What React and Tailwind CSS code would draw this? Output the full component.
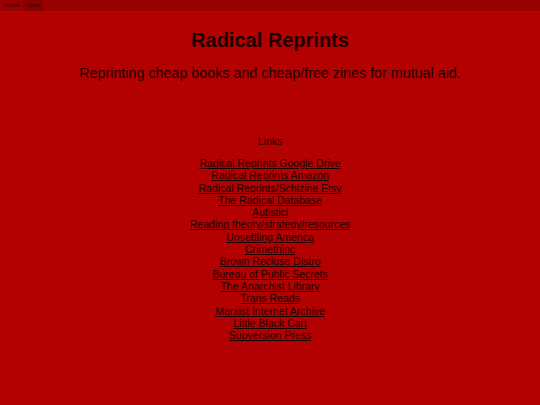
import React from "react";

const links = [
  "Radical Reprints Google Drive",
  "Radical Reprints Amazon",
  "Radical Reprints/Schizine Etsy",
  "The Radical Database",
  "Autistici",
  "Reading theory/strategy/resources",
  "Unsettling America",
  "Crimethinc",
  "Brown Recluse Distro",
  "Bureau of Public Secrets",
  "The Anarchist Library",
  "Trans Reads",
  "Marxist Internet Archive",
  "Little Black Cart",
  "Subversion Press",
];

export default function App() {
  return (
    <div
      className="min-h-[405px] w-full bg-[#b30000] text-[#1a0000]"
      style={{ fontFamily: '"Liberation Sans", Arial, sans-serif' }}
    >
      <nav className="flex h-[12px] items-stretch bg-[#990000] border-b border-[#c00000] px-[1px] text-[6px]">
        <a className="flex items-center px-[3px] text-[#3a0000]">Home</a>
        <a className="flex items-center px-[3px] bg-[#880000] text-[#3a0000]">Links</a>
      </nav>
      <h1 className="mt-[15px] text-center text-[20px] font-bold leading-[26px]">Radical Reprints</h1>
      <p className="mt-[10px] text-center text-[14.3px] leading-[20px]">
        Reprinting cheap books and cheap/free zines for mutual aid.
      </p>
      <h2 className="mt-[51px] text-center text-[10.5px] leading-[14px]">Links</h2>
      <ul className="mt-[9px] flex flex-col items-center text-[10.5px] leading-[12.3px]">
        {links.map((l) => (
          <li key={l}>
            <a className="underline" href="#">{l}</a>
          </li>
        ))}
      </ul>
    </div>
  );
}
